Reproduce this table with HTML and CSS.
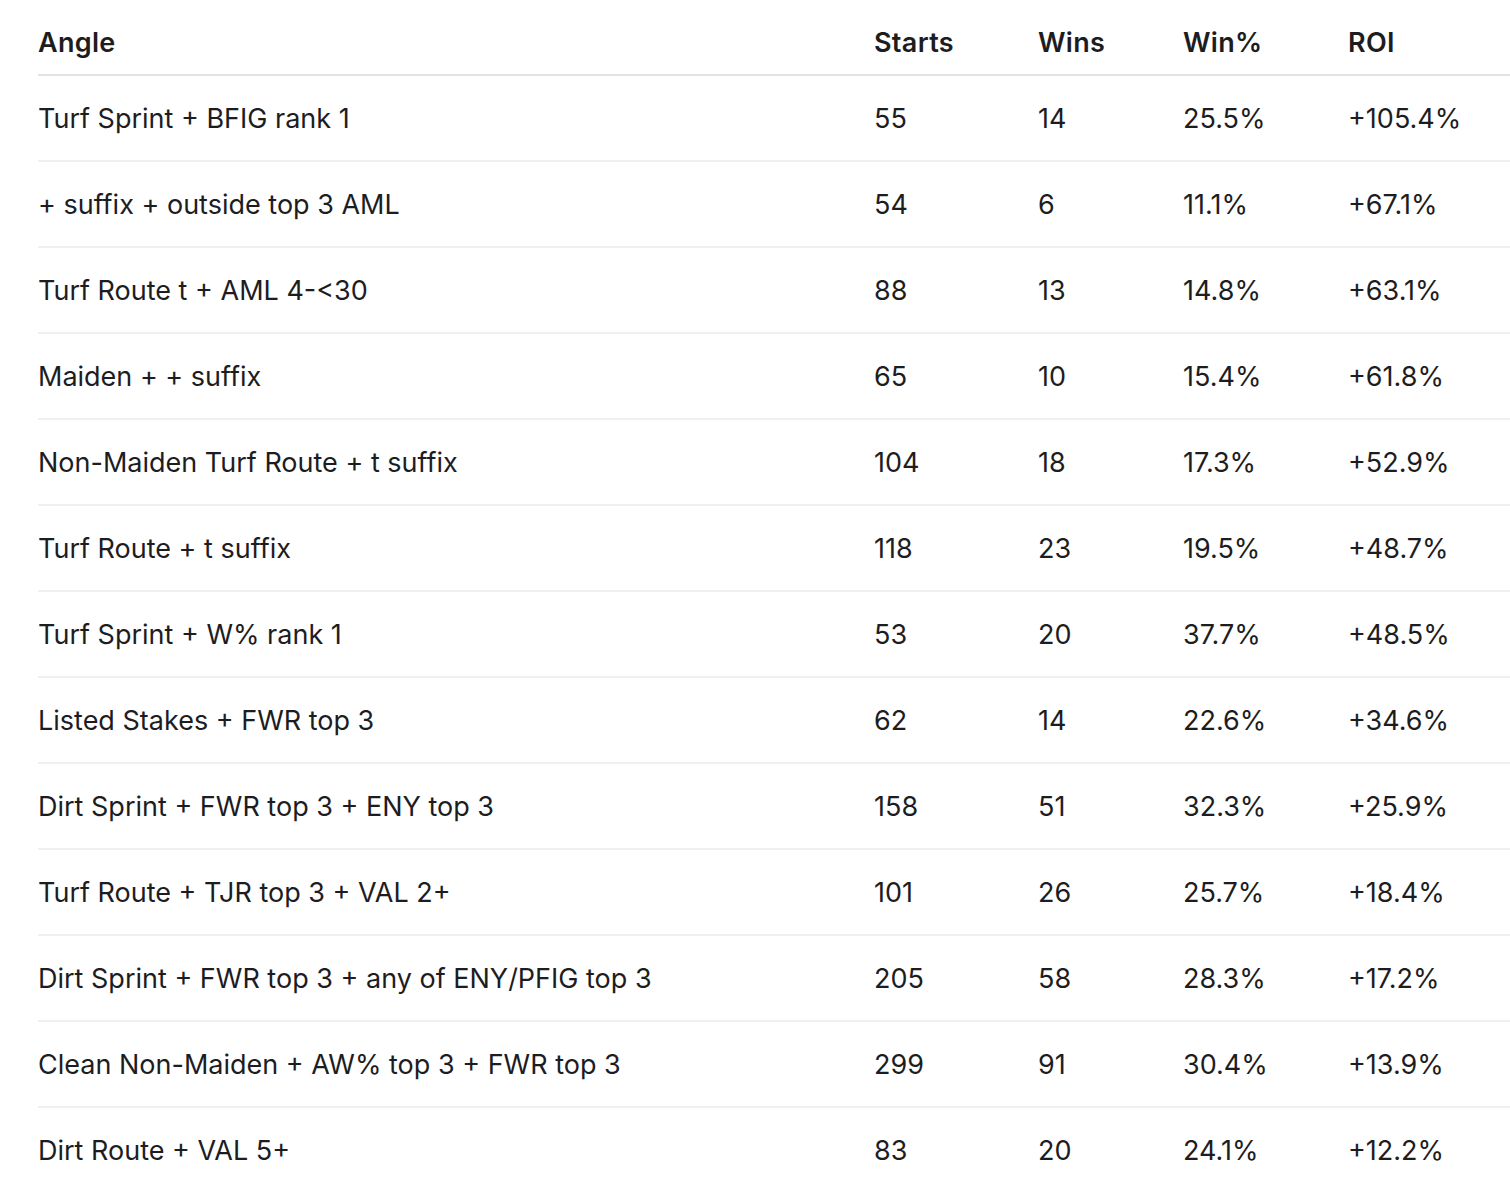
FILE: index.html
```html
<!DOCTYPE html>
<html lang="en">
<head>
<meta charset="utf-8">
<title>Angles</title>
<link rel="stylesheet" href="styles.css">
</head>
<body>
<table class="angles">
  <colgroup>
    <col class="c-angle"><col class="c-starts"><col class="c-wins"><col class="c-pct"><col class="c-roi">
  </colgroup>
  <thead>
    <tr><th>Angle</th><th>Starts</th><th>Wins</th><th>Win%</th><th>ROI</th></tr>
  </thead>
  <tbody>
    <tr><td>Turf Sprint + BFIG rank 1</td><td>55</td><td>14</td><td>25.5%</td><td>+105.4%</td></tr>
    <tr><td>+ suffix + outside top 3 AML</td><td>54</td><td>6</td><td>11.1%</td><td>+67.1%</td></tr>
    <tr><td>Turf Route t + AML 4-&lt;30</td><td>88</td><td>13</td><td>14.8%</td><td>+63.1%</td></tr>
    <tr><td>Maiden + + suffix</td><td>65</td><td>10</td><td>15.4%</td><td>+61.8%</td></tr>
    <tr><td>Non-Maiden Turf Route + t suffix</td><td>104</td><td>18</td><td>17.3%</td><td>+52.9%</td></tr>
    <tr><td>Turf Route + t suffix</td><td>118</td><td>23</td><td>19.5%</td><td>+48.7%</td></tr>
    <tr><td>Turf Sprint + W% rank 1</td><td>53</td><td>20</td><td>37.7%</td><td>+48.5%</td></tr>
    <tr><td>Listed Stakes + FWR top 3</td><td>62</td><td>14</td><td>22.6%</td><td>+34.6%</td></tr>
    <tr><td>Dirt Sprint + FWR top 3 + ENY top 3</td><td>158</td><td>51</td><td>32.3%</td><td>+25.9%</td></tr>
    <tr><td>Turf Route + TJR top 3 + VAL 2+</td><td>101</td><td>26</td><td>25.7%</td><td>+18.4%</td></tr>
    <tr><td>Dirt Sprint + FWR top 3 + any of ENY/PFIG top 3</td><td>205</td><td>58</td><td>28.3%</td><td>+17.2%</td></tr>
    <tr><td>Clean Non-Maiden + AW% top 3 + FWR top 3</td><td>299</td><td>91</td><td>30.4%</td><td>+13.9%</td></tr>
    <tr><td>Dirt Route + VAL 5+</td><td>83</td><td>20</td><td>24.1%</td><td>+12.2%</td></tr>
  </tbody>
</table>
</body>
</html>
```
FILE: styles.css
```css
html, body {
  margin: 0;
  padding: 0;
  background: #ffffff;
}
body {
  font-family: Inter, "Noto Sans", "Liberation Sans", sans-serif;
  color: #1d1d1f;
  overflow: hidden;
}
.angles {
  margin-left: 38px;
  width: 1472px;
  border-collapse: collapse;
  table-layout: fixed;
  font-size: 27px;
  line-height: 32px;
}
.c-angle { width: 836px; }
.c-starts { width: 164px; }
.c-wins { width: 145px; }
.c-pct { width: 165px; }
.c-roi { width: 162px; }
.angles th {
  text-align: left;
  font-weight: 600;
  letter-spacing: 0.3px;
  padding: 27px 0 15px 0;
  border-bottom: 2px solid #e3e3e5;
}
.angles td {
  text-align: left;
  font-weight: 400;
  padding: 27px 0 25px 0;
  border-bottom: 2px solid #f0f0f2;
  white-space: nowrap;
}
```
